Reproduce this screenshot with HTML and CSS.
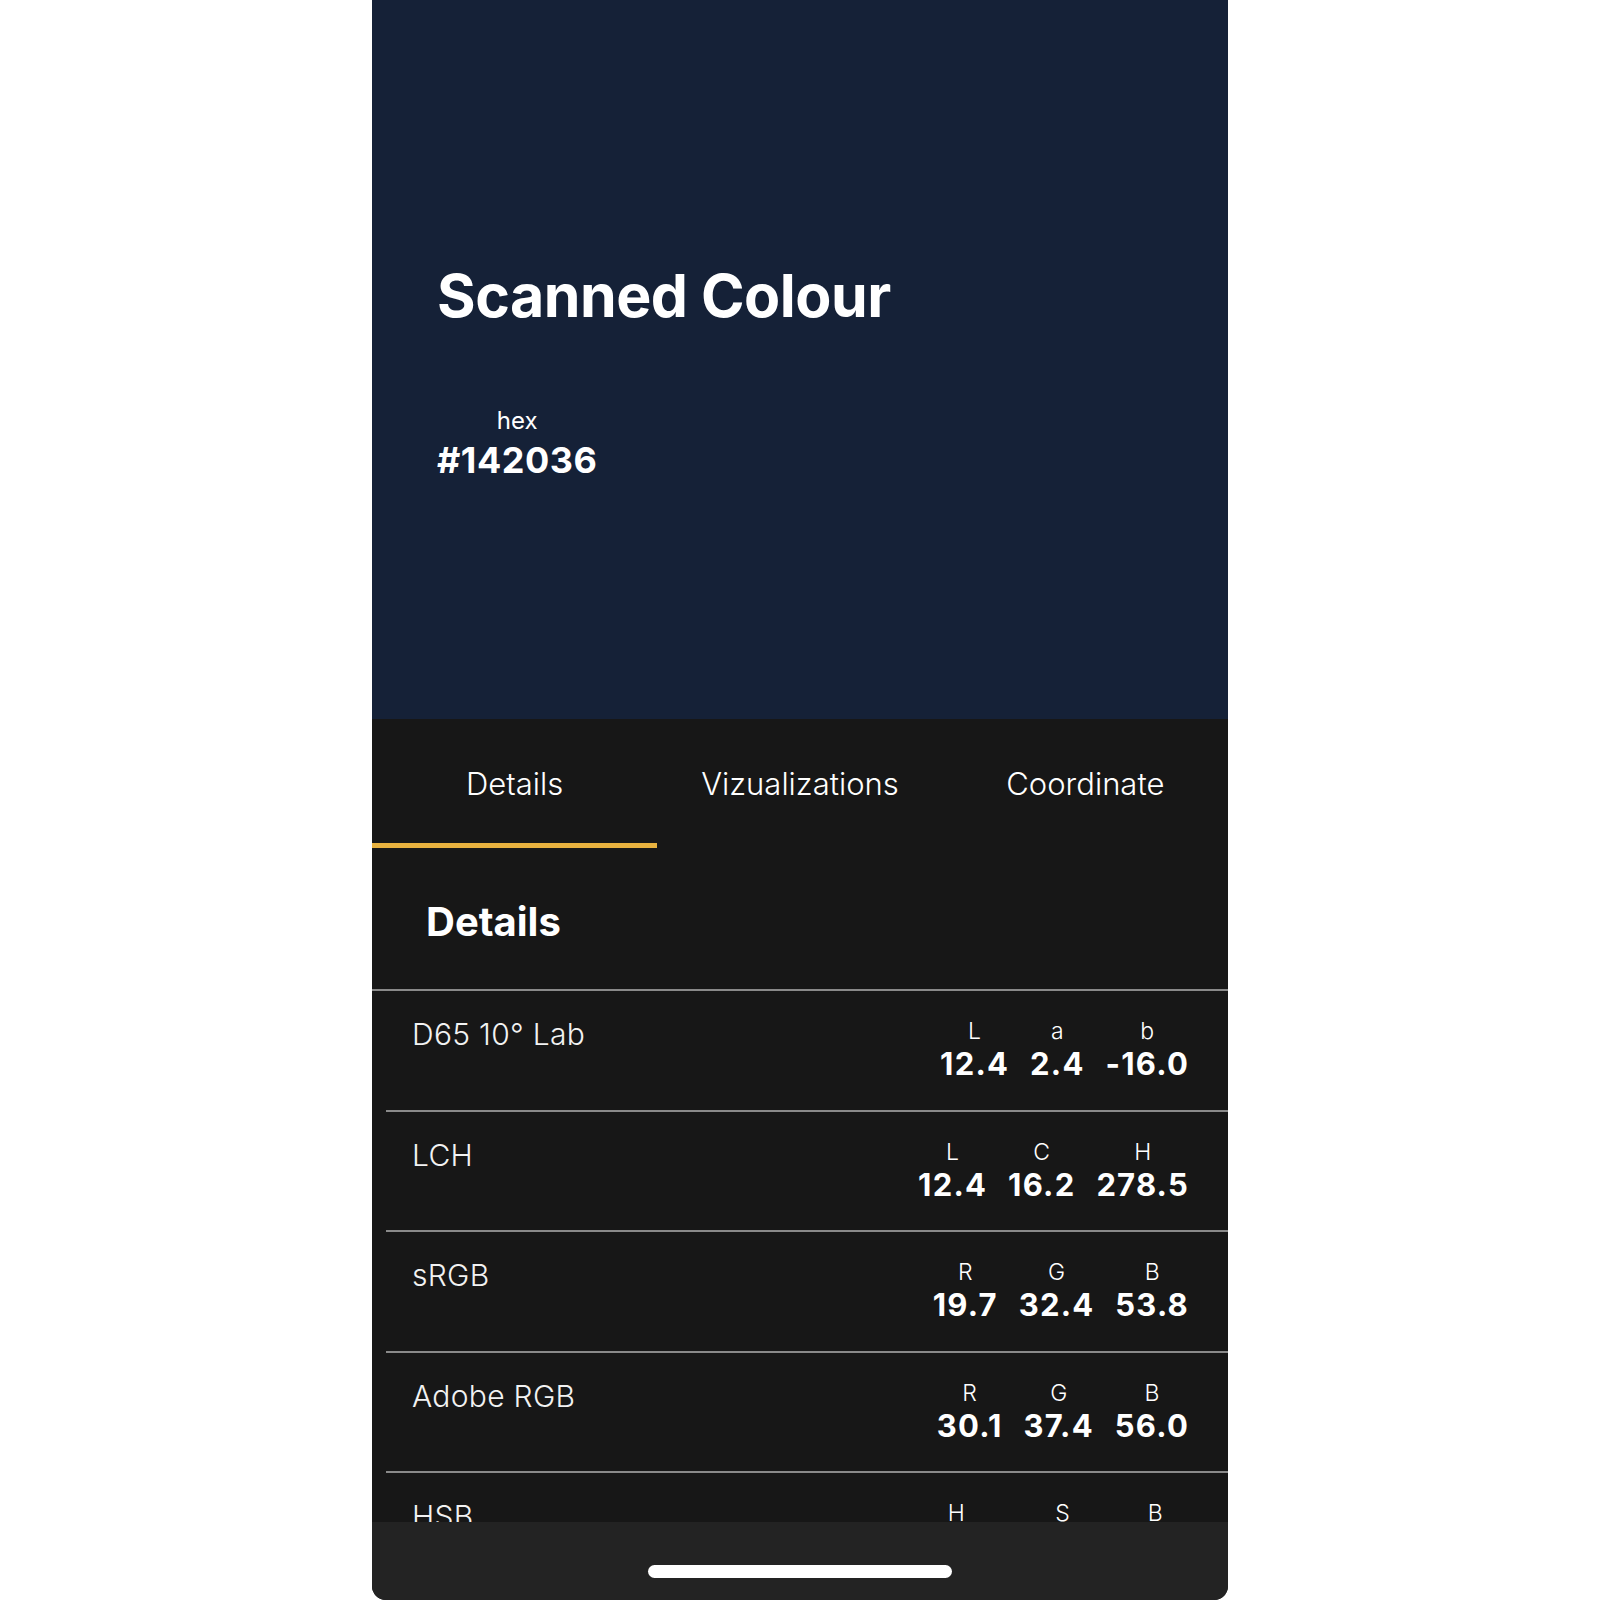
FILE: index.html
```html
<!DOCTYPE html>
<html>
<head>
    <title>Scanned Colour</title>
    <link rel="stylesheet" href="styles.css">
</head>
<body>
    <div class="phone">
        <div class="swatch">
            <h1 class="swatch-title">Scanned Colour</h1>
            <div class="hex">
                <span class="hex-label">hex</span>
                <span class="hex-value">#142036</span>
            </div>
        </div>

        <div class="tabs">
            <div class="tab active">Details</div>
            <div class="tab">Vizualizations</div>
            <div class="tab">Coordinate</div>
        </div>

        <h2 class="section-title">Details</h2>

        <div class="rows">
            <div class="row">
                <div class="row-name">D65 10° Lab</div>
                <div class="values">
                    <div class="value"><span class="key">L</span><span class="num">12.4</span></div>
                    <div class="value"><span class="key">a</span><span class="num">2.4</span></div>
                    <div class="value"><span class="key">b</span><span class="num">-16.0</span></div>
                </div>
            </div>
            <div class="row">
                <div class="row-name">LCH</div>
                <div class="values">
                    <div class="value"><span class="key">L</span><span class="num">12.4</span></div>
                    <div class="value"><span class="key">C</span><span class="num">16.2</span></div>
                    <div class="value"><span class="key">H</span><span class="num">278.5</span></div>
                </div>
            </div>
            <div class="row">
                <div class="row-name">sRGB</div>
                <div class="values">
                    <div class="value"><span class="key">R</span><span class="num">19.7</span></div>
                    <div class="value"><span class="key">G</span><span class="num">32.4</span></div>
                    <div class="value"><span class="key">B</span><span class="num">53.8</span></div>
                </div>
            </div>
            <div class="row">
                <div class="row-name">Adobe RGB</div>
                <div class="values">
                    <div class="value"><span class="key">R</span><span class="num">30.1</span></div>
                    <div class="value"><span class="key">G</span><span class="num">37.4</span></div>
                    <div class="value"><span class="key">B</span><span class="num">56.0</span></div>
                </div>
            </div>
            <div class="row">
                <div class="row-name">HSB</div>
                <div class="values">
                    <div class="value"><span class="key">H</span><span class="num">222.0</span></div>
                    <div class="value"><span class="key">S</span><span class="num">63.4</span></div>
                    <div class="value"><span class="key">B</span><span class="num">21.2</span></div>
                </div>
            </div>
        </div>

        <div class="home-bar">
            <div class="home-indicator"></div>
        </div>
    </div>
</body>
</html>
```

FILE: styles.css
```css
body {
    font-family: Inter, "Noto Sans", sans-serif;
    background-color: #fff;
    margin: 0;
    padding: 0;
}

.phone {
    position: relative;
    width: 856px;
    height: 1600px;
    margin: 0 auto;
    background-color: #171717;
    color: #fff;
    overflow: hidden;
    border-radius: 0 0 14px 14px;
}

.swatch {
    height: 719px;
    background-color: #152137;
    padding: 263px 0 0 65px;
    box-sizing: border-box;
}

.swatch-title {
    margin: 0;
    font-size: 59px;
    line-height: 66px;
    font-weight: 700;
    letter-spacing: -0.5px;
}

.hex {
    display: inline-flex;
    flex-direction: column;
    align-items: center;
    margin-top: 80px;
}

.hex-label {
    font-size: 24px;
    line-height: 24px;
    font-weight: 400;
}

.hex-value {
    margin-top: 8px;
    font-size: 36px;
    line-height: 38px;
    font-weight: 700;
    letter-spacing: 0.5px;
}

.tabs {
    display: flex;
}

.tab {
    flex: 1;
    text-align: center;
    font-size: 31px;
    line-height: 31px;
    font-weight: 300;
    padding: 49px 0 44px;
    border-bottom: 5px solid transparent;
}

.tab.active {
    border-bottom-color: #e8b23f;
}

.section-title {
    margin: 0;
    padding: 54px 0 47px 54px;
    font-size: 40px;
    line-height: 40px;
    font-weight: 700;
    border-bottom: 2px solid #8a8a8a;
}

.row {
    display: flex;
    justify-content: space-between;
    align-items: flex-start;
    height: 120.5px;
    margin-left: 14px;
    padding: 28px 39px 0 26px;
    box-sizing: border-box;
    border-bottom: 2px solid #8a8a8a;
}

.row-name {
    font-size: 30px;
    line-height: 30px;
    font-weight: 300;
    letter-spacing: 0.3px;
    color: #f2f2f2;
}

.values {
    display: flex;
    gap: 21px;
    margin-top: 1px;
}

.value {
    display: flex;
    flex-direction: column;
    align-items: center;
}

.key {
    font-size: 23px;
    line-height: 23px;
    font-weight: 300;
}

.num {
    margin-top: 6px;
    font-size: 31px;
    line-height: 30px;
    font-weight: 700;
    letter-spacing: 1.2px;
}

.home-bar {
    position: absolute;
    left: 0;
    right: 0;
    bottom: 0;
    height: 78px;
    background-color: #232323;
}

.home-indicator {
    width: 304px;
    height: 13px;
    margin: 43px auto 0;
    background-color: #fff;
    border-radius: 7px;
}
```
